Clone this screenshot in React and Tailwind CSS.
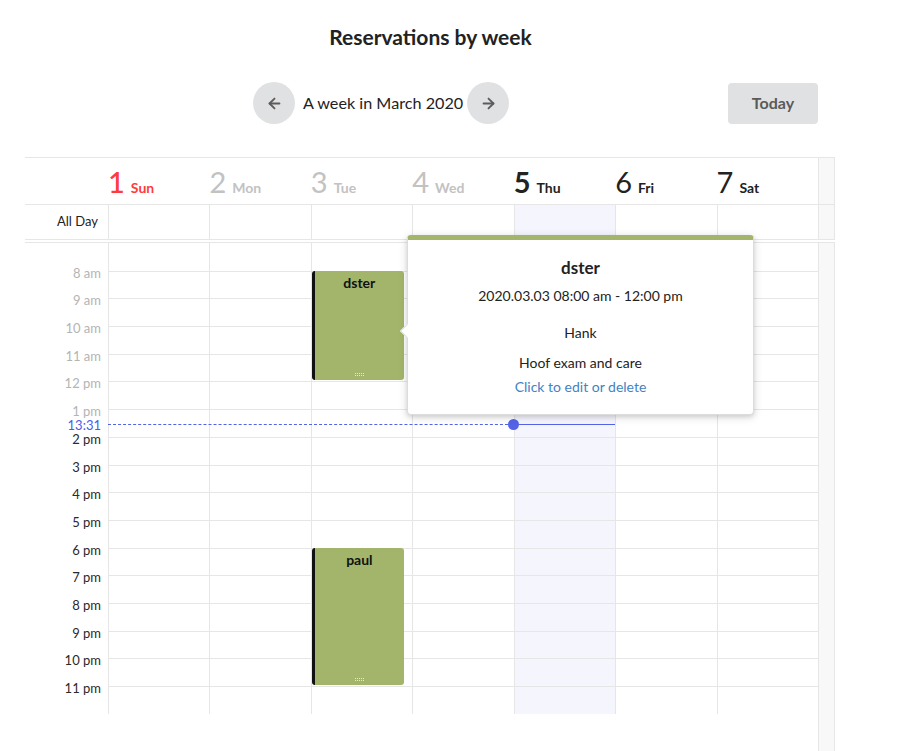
import React from "react";
import { ArrowLeft, ArrowRight } from "lucide-react";

const days = [
    { num: 1, name: "Sun", tone: "sun" },
    { num: 2, name: "Mon", tone: "past" },
    { num: 3, name: "Tue", tone: "past" },
    { num: 4, name: "Wed", tone: "past" },
    { num: 5, name: "Thu", tone: "today" },
    { num: 6, name: "Fri", tone: "future" },
    { num: 7, name: "Sat", tone: "future" },
];

const hourLabels = [
    "8 am", "9 am", "10 am", "11 am", "12 pm", "1 pm",
    "2 pm", "3 pm", "4 pm", "5 pm", "6 pm", "7 pm",
    "8 pm", "9 pm", "10 pm", "11 pm",
];

// 7 am .. midnight
const ROWS = 17;

const events = [
    { day: 2, title: "dster", start: 1, hours: 4 },
    { day: 2, title: "paul", start: 11, hours: 5 },
];

const toneNum = {
    sun: "text-[#ff3b3b] font-medium",
    past: "text-[#c2c2c2] font-normal",
    today: "text-[#222] font-bold",
    future: "text-[#222] font-normal",
};
const toneName = {
    sun: "text-[#ff3b3b]",
    past: "text-[#c2c2c2]",
    today: "text-[#222]",
    future: "text-[#222]",
};

const Handle = () => (
    <svg width="9" height="4" viewBox="0 0 9 4" className="opacity-70">
        {[0, 2, 4, 6, 8].map((x) => (
            <React.Fragment key={x}>
                <rect x={x} y="0" width="1" height="1" fill="#fff" />
                <rect x={x} y="2" width="1" height="1" fill="#fff" />
            </React.Fragment>
        ))}
    </svg>
);

const EventBlock = ({ title, start, hours }) => (
    <div
        className="absolute left-0 w-[92px] rounded-[3px] border-l-[3px] border-[#111] bg-[#a3b56b] flex flex-col items-center justify-between pt-[2px] pb-[3px]"
        style={{ top: start * 27.7, height: hours * 27.7 - 1 }}
    >
        <span className="text-[14px] font-bold text-[#111] leading-5">{title}</span>
        <Handle />
    </div>
);

const App = () => {
    return (
        <div className="min-h-screen bg-white text-[#222] font-['Lato','Noto_Sans',sans-serif] overflow-hidden">
            <h1 className="text-center text-[21px] font-bold leading-7 pt-[23px] w-[861px]">
                Reservations by week
            </h1>

            <div className="ml-[25px] w-[793px] mt-[31px] flex items-center">
                <div className="ml-[228px] flex items-center">
                    <button className="w-[42px] h-[42px] rounded-full bg-[#e0e1e2] flex items-center justify-center text-[#5c5c5c]">
                        <ArrowLeft size={17} strokeWidth={2.6} />
                    </button>
                    <span className="ml-[8px] mr-[4px] text-[16.2px] text-[#222]">
                        A week in March 2020
                    </span>
                    <button className="w-[42px] h-[42px] rounded-full bg-[#e0e1e2] flex items-center justify-center text-[#5c5c5c]">
                        <ArrowRight size={17} strokeWidth={2.6} />
                    </button>
                </div>
                <button className="ml-auto w-[90px] h-[41px] rounded-[4px] bg-[#e0e1e2] text-[16px] font-bold text-[#5a5a5a]">
                    Today
                </button>
            </div>

            <div className="relative ml-[25px] mt-[33px] w-[810px] border-t border-[#e6e6e6]">
                {/* header */}
                <div className="flex h-[47px] border-b border-[#e6e6e6]">
                    <div className="w-[793px] grid grid-cols-[83px_repeat(7,1fr)]">
                        <div />
                        {days.map((d) => (
                            <div key={d.num} className="flex items-baseline pt-[9px]">
                                <span className={`text-[29px] leading-none ${toneNum[d.tone]}`}>
                                    {d.num}
                                </span>
                                <span className={`ml-[6px] text-[14px] font-bold ${toneName[d.tone]}`}>
                                    {d.name}
                                </span>
                            </div>
                        ))}
                    </div>
                    <div className="flex-1 bg-[#f8f8f8] border-l border-r border-[#e6e6e6]" />
                </div>

                {/* all day */}
                <div className="flex h-[35px] border-b border-[#e6e6e6]">
                    <div className="w-[793px] grid grid-cols-[83px_repeat(7,1fr)]">
                        <div className="flex items-center justify-end pr-[10px] text-[13px] text-[#222]">
                            All Day
                        </div>
                        {days.map((d) => (
                            <div
                                key={d.num}
                                className={`border-l border-[#e6e6e6] ${d.tone === "today" ? "bg-[#f4f5fd]" : ""}`}
                            />
                        ))}
                    </div>
                    <div className="flex-1 bg-[#f8f8f8] border-l border-r border-[#e6e6e6]" />
                </div>

                {/* body */}
                <div className="flex mt-[2px] border-t border-[#e6e6e6]">
                    <div className="relative w-[793px] h-[471px] grid grid-cols-[83px_repeat(7,1fr)]">
                        <div className="flex flex-col pt-[15.85px]">
                            {hourLabels.map((h, i) => (
                                <div
                                    key={h}
                                    className="h-[27.7px] shrink-0 flex items-center justify-end pr-[7px]"
                                >
                                    <span
                                        className={`text-[13px] leading-[12px] ${i < 6 ? "text-[#b4b4b4]" : "text-[#2a2a2a]"}`}
                                    >
                                        {h}
                                    </span>
                                </div>
                            ))}
                        </div>
                        {days.map((d, di) => (
                            <div
                                key={d.num}
                                className={`relative border-l border-[#e6e6e6] flex flex-col ${d.tone === "today" ? "bg-[#f4f5fd]" : ""}`}
                            >
                                {Array.from({ length: ROWS }).map((_, r) => (
                                    <div
                                        key={r}
                                        className={`h-[27.7px] shrink-0 ${r > 0 ? "border-t border-[#e6e6e6]" : ""}`}
                                    />
                                ))}
                                {events
                                    .filter((e) => e.day === di)
                                    .map((e) => (
                                        <EventBlock key={e.title} {...e} />
                                    ))}
                            </div>
                        ))}

                        {/* current time */}
                        <div className="absolute left-0 top-[176px] w-[83px] pr-[7px] text-right text-[13px] leading-[12px] text-[#4a5af0]">
                            13:31
                        </div>
                        <div className="absolute left-[83px] top-[181px] w-[405px] border-t border-dashed border-[#5563e8]" />
                        <div className="absolute left-[488px] top-[181px] w-[102px] border-t border-[#5563e8]" />
                        <div className="absolute left-[483px] top-[176px] w-[11px] h-[11px] rounded-full bg-[#5563e8]" />
                    </div>
                    <div className="flex-1 h-[540px] bg-[#f8f8f8] border-l border-r border-[#e6e6e6]" />
                </div>

                {/* popup */}
                <div className="absolute left-[382px] top-[77px] w-[347px] h-[180px] bg-white rounded-[4px] border border-[#dcdcdd] border-t-[5px] border-t-[#a3b56b] shadow-[0_2px_4px_0_rgba(34,36,38,0.12),0_2px_10px_0_rgba(34,36,38,0.15)] flex flex-col items-center pt-[16px]">
                    <div className="absolute left-[-6px] top-[86px] w-[10px] h-[10px] bg-white rotate-45 border-l border-b border-[#dcdcdd]" />
                    <div className="text-[17px] font-bold leading-6 text-[#222]">dster</div>
                    <div className="mt-[6px] text-[14px] leading-5 text-[#222]">
                        2020.03.03 08:00 am - 12:00 pm
                    </div>
                    <div className="mt-[17px] text-[14px] leading-5 text-[#222]">Hank</div>
                    <div className="mt-[10px] text-[14px] leading-5 text-[#222]">Hoof exam and care</div>
                    <div className="mt-[4px] text-[14px] leading-5 text-[#4183c4]">
                        Click to edit or delete
                    </div>
                </div>
            </div>
        </div>
    );
};

export default App;
